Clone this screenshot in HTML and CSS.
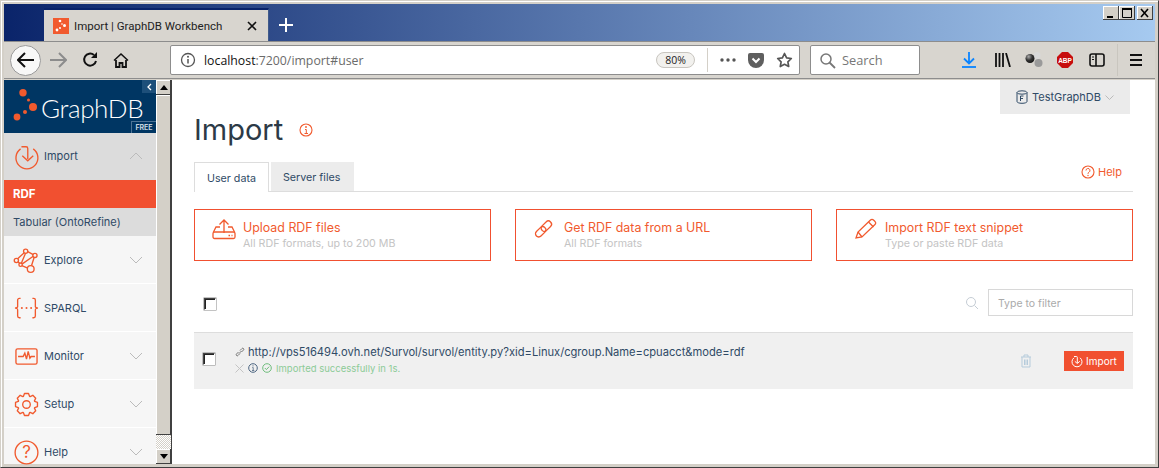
FILE: index.html
```html
<!DOCTYPE html>
<html>
  <head>
    <title>Import | GraphDB Workbench</title>
    <meta charset="utf-8">
    <link rel="stylesheet" href="styles.css">
  </head>
  <body>
    <div class="window">
      <div class="titlebar">
        <div class="tab">
          <svg class="favicon" width="16" height="16" viewBox="0 0 16 16"><rect width="16" height="16" fill="#f15a2e"/><g fill="#fff"><circle cx="7" cy="3" r="1.3"/><circle cx="9" cy="6" r=".8"/><circle cx="11.5" cy="7.5" r="1.5"/><circle cx="7" cy="10" r="1"/><circle cx="4" cy="12" r="1.4"/></g></svg>
          <span class="tab-title">Import | GraphDB Workbench</span>
          <svg class="tab-close" width="10" height="10" viewBox="0 0 10 10"><path d="M1 1l8 8M9 1l-8 8" stroke="#111" stroke-width="1.6"/></svg>
        </div>
        <svg class="newtab" width="14" height="14" viewBox="0 0 14 14"><path d="M7 0v14M0 7h14" stroke="#fff" stroke-width="2"/></svg>
        <div class="winbtns">
          <div class="winbtn"><svg width="16" height="14" viewBox="0 0 16 14"><rect x="4" y="10" width="6" height="2" fill="#000"/></svg></div>
          <div class="winbtn"><svg width="16" height="14" viewBox="0 0 16 14"><path d="M3.5 2.5h9v9h-9z" fill="none" stroke="#000"/><rect x="3" y="2" width="10" height="2" fill="#000"/></svg></div>
          <div class="winbtn winbtn-close"><svg width="16" height="14" viewBox="0 0 16 14"><path d="M4 3l7 8M11 3l-7 8" stroke="#000" stroke-width="1.6"/></svg></div>
        </div>
      </div>

      <div class="toolbar">
        <div class="backbtn">
          <svg width="18" height="16" viewBox="0 0 18 16"><path d="M8 1L1 8l7 7M1 8h16" fill="none" stroke="#111" stroke-width="2"/></svg>
        </div>
        <svg class="tool fwd" width="18" height="16" viewBox="0 0 18 16"><path d="M10 1l7 7-7 7M17 8H1" fill="none" stroke="#8c8c8c" stroke-width="2"/></svg>
        <svg class="tool reload" width="16" height="16" viewBox="0 0 16 16"><path d="M14 9a6 6 0 1 1-2-6" fill="none" stroke="#111" stroke-width="2"/><path d="M15 0v6H9z" fill="#111"/></svg>
        <svg class="tool home" width="16" height="16" viewBox="0 0 16 16"><path d="M8 1L0.5 8l1 1L8 3l6.500 6 1-1z" fill="#111"/><path d="M3 8v7h3.500v-4h3v4H13V8" fill="none" stroke="#111" stroke-width="1.800"/></svg>
        <div class="urlbar">
          <svg class="url-info" width="16" height="16" viewBox="0 0 16 16"><circle cx="8" cy="8" r="6.500" fill="none" stroke="#555" stroke-width="1.300"/><path d="M8 7v4.500" stroke="#555" stroke-width="1.500"/><circle cx="8" cy="4.800" r="1" fill="#555"/></svg>
          <span class="url"><b class="url-host">localhost</b>:7200/import#user</span>
          <span class="zoom-pill">80%</span>
          <span class="url-sep"></span>
          <svg class="url-dots" width="16" height="4" viewBox="0 0 16 4"><circle cx="2" cy="2" r="1.700" fill="#555"/><circle cx="8" cy="2" r="1.700" fill="#555"/><circle cx="14" cy="2" r="1.700" fill="#555"/></svg>
          <svg class="url-pocket" width="16" height="15" viewBox="0 0 16 15"><path d="M0 2a2 2 0 0 1 2-2h12a2 2 0 0 1 2 2v5a8 8 0 0 1-16 0z" fill="#5f5f5f"/><path d="M4.500 5.500L8 9l3.500-3.500" fill="none" stroke="#fff" stroke-width="2"/></svg>
          <svg class="url-star" width="17" height="16" viewBox="0 0 17 16"><path d="M8.500 1.500l2.100 4.300 4.700.7-3.400 3.300.8 4.700-4.200-2.200-4.200 2.200.8-4.700L1.700 6.500l4.700-.7z" fill="none" stroke="#555" stroke-width="1.700" stroke-linejoin="round"/></svg>
        </div>
        <div class="searchbar">
          <svg width="17" height="17" viewBox="0 0 17 17"><circle cx="7" cy="7" r="5" fill="none" stroke="#777" stroke-width="1.500"/><path d="M10.500 10.500L16 16" stroke="#777" stroke-width="1.800"/></svg>
          <span>Search</span>
        </div>
        <svg class="tool dl" width="14" height="16" viewBox="0 0 14 16"><path d="M7 0v11M2 6.500l5 5 5-5" fill="none" stroke="#0a84ff" stroke-width="1.800"/><path d="M0 15h14" stroke="#0a84ff" stroke-width="1.800"/></svg>
        <svg class="tool lib" width="16" height="14" viewBox="0 0 16 14"><path d="M1 0v14M4.500 0v14M8 0v14M11 0l4 14" stroke="#111" stroke-width="1.800"/></svg>
        <svg class="tool balls" width="18" height="16" viewBox="0 0 18 16"><defs><radialGradient id="ball" cx=".35" cy=".3" r=".8"><stop offset="0" stop-color="#aaa"/><stop offset=".5" stop-color="#333"/><stop offset="1" stop-color="#111"/></radialGradient></defs><circle cx="12" cy="3.500" r="3.500" fill="#d8d8d8"/><circle cx="13.500" cy="11" r="4" fill="#9a9a9a"/><circle cx="5" cy="6.500" r="4.500" fill="url(#ball)"/></svg>
        <svg class="tool abp" width="16" height="16" viewBox="0 0 16 16"><path d="M5 0h6l5 5v6l-5 5H5l-5-5V5z" fill="#c70d0d"/><text x="8" y="10.500" class="abp-text" text-anchor="middle">ABP</text></svg>
        <svg class="tool side" width="16" height="14" viewBox="0 0 16 14"><rect x="1" y="1" width="14" height="12" rx="2" fill="none" stroke="#111" stroke-width="1.600"/><path d="M7 1v12" stroke="#111" stroke-width="1.600"/><path d="M3 4h2M3 6.500h2" stroke="#111"/></svg>
        <span class="tool-sep"></span>
        <svg class="tool burger" width="12" height="12" viewBox="0 0 12 12"><path d="M0 1h12M0 6h12M0 11h12" stroke="#111" stroke-width="1.800"/></svg>
      </div>

      <div class="page">
        <div class="sidebar">
          <div class="logo">
            <svg class="logo-dots" width="30" height="36" viewBox="0 0 30 36"><g fill="#f15a2e"><circle cx="10" cy="3.700" r="3.700"/><circle cx="15.500" cy="11" r="1.500"/><circle cx="20" cy="18" r="4"/><circle cx="12" cy="23" r="2"/><circle cx="4" cy="28" r="3.400"/></g></svg>
            <span class="logo-text">GraphDB</span>
            <span class="collapse"><svg width="6" height="8" viewBox="0 0 6 8"><path d="M5 1L2 4l3 3" fill="none" stroke="#fff" stroke-width="1.300"/></svg></span>
            <span class="free">FREE</span>
          </div>
          <div class="menu-item menu-open">
            <svg class="menu-icon" viewBox="0 0 32 32"><path d="M10 4.500h5.500a2 2 0 0 1 2 2V19" fill="none" stroke="#f15a2e"/><path d="M11 15l6.500 6 6.500-6" fill="none" stroke="#f15a2e"/><path d="M9 7a13 13 0 1 0 15 0" fill="none" stroke="#f15a2e"/></svg>
            <span>Import</span>
            <svg class="chev" width="14" height="8" viewBox="0 0 14 8"><path d="M1 7l6-6 6 6" fill="none" stroke="#bbb"/></svg>
          </div>
          <div class="sub sub-active">RDF</div>
          <div class="sub">Tabular (OntoRefine)</div>
          <div class="menu-item">
            <svg class="menu-icon" viewBox="0 0 32 32"><g fill="none" stroke="#f15a2e"><circle cx="15" cy="5" r="2.500"/><circle cx="4" cy="16" r="2.500"/><circle cx="26" cy="10" r="2.500"/><circle cx="21" cy="26" r="4"/><circle cx="9" cy="21" r="2"/><path d="M13 7L5.500 14M17.500 5.500L24 9M25 12.500L22 22M10.500 22l7 3M6 17.500l2 2M10 19l5-12M11 20l13-9"/></g></svg>
            <span>Explore</span>
            <svg class="chev" width="14" height="8" viewBox="0 0 14 8"><path d="M1 1l6 6 6-6" fill="none" stroke="#bbb"/></svg>
          </div>
          <div class="menu-item">
            <svg class="menu-icon" viewBox="0 0 32 32"><g fill="none" stroke="#f15a2e"><path d="M9 4H7.500a2 2 0 0 0-2 2v6.500a2.500 2.500 0 0 1-3 3 2.500 2.500 0 0 1 3 3V25a2 2 0 0 0 2 2H9"/><path d="M23 4h1.500a2 2 0 0 1 2 2v6.500a2.500 2.500 0 0 0 3 3 2.500 2.500 0 0 0-3 3V25a2 2 0 0 1-2 2H23"/></g><g fill="#f15a2e"><circle cx="10.500" cy="15.500" r="1.200"/><circle cx="16" cy="15.500" r="1.200"/><circle cx="21.500" cy="15.500" r="1.200"/></g></svg>
            <span>SPARQL</span>
          </div>
          <div class="menu-item">
            <svg class="menu-icon" viewBox="0 0 32 32"><rect x="3.500" y="7" width="25" height="18" rx="2" fill="none" stroke="#f15a2e"/><path d="M6 16h6l2-4 2 7 2-9 2 8 1.500-2H26" fill="none" stroke="#f15a2e"/></svg>
            <span>Monitor</span>
            <svg class="chev" width="14" height="8" viewBox="0 0 14 8"><path d="M1 1l6 6 6-6" fill="none" stroke="#bbb"/></svg>
          </div>
          <div class="menu-item">
            <svg class="menu-icon" viewBox="0 0 32 32"><g transform="translate(16 16)" fill="none" stroke="#f15a2e" stroke-linejoin="round"><circle r="4.500"/><path d="M-3.600-9.700L-2.400-13H2.400L3.600-9.700L4.310-9.410L7.500-10.900L10.900-7.500L9.410-4.310L9.700-3.600L13-2.400V2.400L9.700 3.600L9.410 4.310L10.900 7.500L7.500 10.900L4.310 9.410L3.600 9.700L2.400 13H-2.400L-3.600 9.700L-4.310 9.410L-7.500 10.900L-10.900 7.500L-9.410 4.310L-9.700 3.600L-13 2.400V-2.400L-9.700-3.600L-9.410-4.310L-10.900-7.500L-7.500-10.900L-4.310-9.410z"/></g></svg>
            <span>Setup</span>
            <svg class="chev" width="14" height="8" viewBox="0 0 14 8"><path d="M1 1l6 6 6-6" fill="none" stroke="#bbb"/></svg>
          </div>
          <div class="menu-item">
            <svg class="menu-icon" viewBox="0 0 32 32"><circle cx="16" cy="16" r="13.500" fill="none" stroke="#f15a2e"/><text x="16" y="23" class="help-q" text-anchor="middle">?</text></svg>
            <span>Help</span>
            <svg class="chev" width="14" height="8" viewBox="0 0 14 8"><path d="M1 1l6 6 6-6" fill="none" stroke="#bbb"/></svg>
          </div>
        </div>

        <div class="scrollbar">
          <div class="sb-btn"><svg width="8" height="5" viewBox="0 0 8 5"><path d="M4 0l4 5H0z" fill="#000"/></svg></div>
          <div class="sb-thumb"></div>
          <div class="sb-track"></div>
          <div class="sb-btn"><svg width="8" height="5" viewBox="0 0 8 5"><path d="M0 0h8L4 5z" fill="#000"/></svg></div>
        </div>

        <div class="main">
          <div class="repo-row">
            <div class="repo">
              <svg width="12" height="14" viewBox="0 0 12 14"><g fill="none" stroke="#2f4a66" stroke-width="1"><ellipse cx="6" cy="2.500" rx="5" ry="1.700"/><path d="M1 2.500v9c0 1 2 1.800 5 1.800s5-.8 5-1.800v-9"/><path d="M4.500 6h3M4.500 6v5M4.500 8.500h2.500"/></g></svg>
              <span>TestGraphDB</span>
              <svg width="9" height="5" viewBox="0 0 9 5"><path d="M.5.500l4 4 4-4" fill="none" stroke="#bbb"/></svg>
            </div>
          </div>

          <div class="title-row">
            <h1>Import</h1>
            <svg width="14" height="14" viewBox="0 0 14 14"><circle cx="7" cy="7" r="6" fill="none" stroke="#f15a2e" stroke-width="1.100"/><path d="M6 6.500h1.300V10.500M5.500 10.500h3.500" fill="none" stroke="#f15a2e"/><circle cx="7" cy="4" r=".9" fill="#f15a2e"/></svg>
          </div>

          <div class="tabs">
            <div class="tabs-link tabs-active">User data</div>
            <div class="tabs-link">Server files</div>
            <div class="help-link">
              <svg width="14" height="14" viewBox="0 0 14 14"><circle cx="7" cy="7" r="6" fill="none" stroke="#f15a2e" stroke-width="1.100"/><path d="M5 5.500a2 2 0 1 1 3 1.700c-.7.400-1 .8-1 1.600" fill="none" stroke="#f15a2e"/><circle cx="7" cy="10.500" r=".7" fill="#f15a2e"/></svg>
              <span>Help</span>
            </div>
          </div>

          <div class="cards">
            <div class="card">
              <svg class="card-icon" width="24" height="22" viewBox="0 0 24 22"><g fill="none" stroke="#f15a2e" stroke-width="1.300"><path d="M12 15V2M7.500 6.500L12 2l4.500 4.500"/><path d="M8 9H4L1.500 14M16 9h4l2.500 5"/><rect x="1" y="14" width="22" height="6.500" rx="1.500"/><path d="M16.500 17.500h1.500M19.500 17.500h1"/></g></svg>
              <div class="card-text">
                <div class="card-title">Upload RDF files</div>
                <div class="card-sub">All RDF formats, up to 200 MB</div>
              </div>
            </div>
            <div class="card">
              <svg class="card-icon" width="24" height="22" viewBox="0 0 24 22"><g transform="translate(-1.500 0) rotate(-45 12 11)" fill="none" stroke="#f15a2e" stroke-width="1.300"><rect x="2" y="7.800" width="12" height="6.400" rx="3.200"/><rect x="10" y="7.800" width="12" height="6.400" rx="3.200"/></g></svg>
              <div class="card-text">
                <div class="card-title">Get RDF data from a URL</div>
                <div class="card-sub">All RDF formats</div>
              </div>
            </div>
            <div class="card">
              <svg class="card-icon" width="24" height="22" viewBox="0 0 24 22"><g fill="none" stroke="#f15a2e" stroke-width="1.300"><path d="M2 20l2-6L16.500 2a2 2 0 0 1 3 0l1.500 1.500a2 2 0 0 1 0 3L8 19z"/><path d="M4 14l4 5M14.500 4l5 5"/></g></svg>
              <div class="card-text">
                <div class="card-title">Import RDF text snippet</div>
                <div class="card-sub">Type or paste RDF data</div>
              </div>
            </div>
          </div>

          <div class="list-head">
            <span class="check"></span>
            <svg class="filter-icon" width="14" height="14" viewBox="0 0 14 14"><circle cx="6" cy="6" r="4.500" fill="none" stroke="#c5cdd5"/><path d="M9.500 9.500L13 13" stroke="#c5cdd5"/></svg>
            <div class="filter">Type to filter</div>
          </div>

          <div class="import-row">
            <span class="check"></span>
            <div class="row-info">
              <div class="row-url">
                <svg width="10" height="10" viewBox="0 0 10 10"><g fill="none" stroke="#777"><path d="M4 6.500L6.500 4"/><path d="M3.500 5L1.500 7a1 1 0 0 0 1.500 1.500L5 6.500"/><path d="M6.500 5L8.500 3A1 1 0 0 0 7 1.500L5 3.500"/></g></svg>
                <span>http://vps516494.ovh.net/Survol/survol/entity.py?xid=Linux/cgroup.Name=cpuacct&amp;mode=rdf</span>
              </div>
              <div class="row-status">
                <svg width="9" height="9" viewBox="0 0 9 9"><path d="M.5.500l8 8M8.500.500l-8 8" stroke="#c4c4c4"/></svg>
                <svg width="10" height="10" viewBox="0 0 10 10"><circle cx="5" cy="5" r="4.300" fill="none" stroke="#4c6580"/><path d="M4.300 4.500H5.200V7.500M4 7.500h2.300" fill="none" stroke="#4c6580" stroke-width=".8"/><circle cx="5" cy="2.800" r=".6" fill="#4c6580"/></svg>
                <svg width="10" height="10" viewBox="0 0 10 10"><circle cx="5" cy="5" r="4.300" fill="none" stroke="#6fbd7c"/><path d="M2.800 5l1.600 1.600 2.800-3" fill="none" stroke="#6fbd7c"/></svg>
                <span>Imported successfully in 1s.</span>
              </div>
            </div>
            <svg class="trash" width="12" height="14" viewBox="0 0 12 14"><g fill="none" stroke="#b5cbdb"><path d="M1 3h10M4 3V1h4v2M2 3v10h8V3"/><path d="M4.500 5.500v5.500M6 5.500v5.500M7.500 5.500v5.500"/></g></svg>
            <div class="import-btn">
              <svg width="12" height="13" viewBox="0 0 12 13"><g fill="none" stroke="#fff"><path d="M3 1.500h2.500a.8.800 0 0 1 .8.800V8"/><path d="M3.800 6.300L6.300 8.500l2.500-2.200"/><path d="M3 2.800a5 5 0 1 0 6 0"/></g></svg>
              <span>Import</span>
            </div>
          </div>
        </div>
      </div>
    </div>
  </body>
</html>
```

FILE: styles.css
```css
html, body {
  margin: 0;
  height: 468px;
  overflow: hidden;
}

.window {
  box-sizing: border-box;
  width: 1159px;
  height: 468px;
  display: flex;
  flex-direction: column;
  background: #d4d0c8;
  border: 1px solid #404040;
  border-top-color: #d4d0c8;
  border-left-color: #d4d0c8;
  padding: 3px;
  box-shadow: inset 1px 1px 0 #fff;
  overflow: hidden;
}

.titlebar {
  height: 37px;
  flex: none;
  display: flex;
  align-items: flex-end;
  padding-left: 40px;
  background: linear-gradient(90deg, #0a246a, #a6caf0);
}

.tab {
  box-sizing: border-box;
  width: 225px;
  height: 33px;
  display: flex;
  align-items: center;
  padding: 0 11px 0 9px;
  background: #d8d5cf;
  border-top: 2px solid #0a246a;
  border-right: 1px solid #3f5a8a;
}

.favicon {
  margin-right: 5px;
}

.tab-title {
  flex: 1;
  font: 11.5px Roboto, sans-serif;
  color: #222;
  white-space: nowrap;
}

.newtab {
  margin: 0 0 9px 10px;
}

.winbtns {
  margin: 0 2px 21px auto;
  display: flex;
}

.winbtn {
  width: 16px;
  height: 14px;
  background: #d4d0c8;
  box-shadow: inset -1px -1px 0 #404040, inset 1px 1px 0 #fff;
}

.winbtn-close {
  margin-left: 2px;
}

.toolbar {
  box-sizing: border-box;
  height: 38px;
  flex: none;
  display: flex;
  align-items: center;
  padding-left: 6px;
  background: #d8d5cf;
  border-top: 1px solid #8d8d8d;
  border-bottom: 1px solid #8d8d8d;
}

.backbtn {
  box-sizing: border-box;
  width: 31px;
  height: 31px;
  display: flex;
  align-items: center;
  justify-content: center;
  background: #f8f8f7;
  border: 1px solid #9a9a9a;
  border-radius: 50%;
}

.fwd {
  margin-left: 8px;
}

.reload {
  margin-left: 15px;
}

.home {
  margin-left: 15px;
}

.urlbar {
  box-sizing: border-box;
  width: 630px;
  height: 30px;
  margin-left: 41px;
  display: flex;
  align-items: center;
  padding-left: 9px;
  background: #fff;
  border: 1px solid #8d8d8d;
  border-radius: 2px;
}

.url {
  margin-left: 8px;
  flex: 1;
  font: 12.3px "Open Sans", sans-serif;
  color: #6b6b6b;
  white-space: nowrap;
}

.url-host {
  font-weight: 400;
  color: #111;
}

.zoom-pill {
  box-sizing: border-box;
  width: 39px;
  height: 16px;
  border: 1px solid #c8c5bf;
  border-radius: 8px;
  background: #f2f1ee;
  font: 10.5px/14px "Open Sans", sans-serif;
  text-align: center;
  color: #222;
}

.url-sep {
  width: 1px;
  height: 24px;
  margin-left: 12px;
  background: #d4d0c8;
}

.url-dots {
  margin-left: 12px;
}

.url-pocket {
  margin-left: 12px;
}

.url-star {
  margin: 0 6px 0 12px;
}

.searchbar {
  box-sizing: border-box;
  width: 110px;
  height: 30px;
  margin-left: 10px;
  display: flex;
  align-items: center;
  gap: 6px;
  padding-left: 8px;
  background: #fff;
  border: 1px solid #8d8d8d;
  border-radius: 2px;
  font: 12.8px "Open Sans", sans-serif;
  color: #777;
}

.dl {
  margin-left: 42px;
}

.lib {
  margin-left: 19px;
}

.balls {
  margin-left: 14px;
}

.abp {
  margin-left: 14px;
}

.abp-text {
  font: bold 6.5px "Liberation Sans", sans-serif;
  fill: #fff;
}

.side {
  margin-left: 16px;
}

.tool-sep {
  width: 1px;
  height: 32px;
  margin-left: 12px;
  background: #c9c6bf;
}

.burger {
  margin-left: 12px;
}

.page {
  flex: 1;
  min-height: 0;
  display: flex;
  margin-top: 1px;
}

.sidebar {
  width: 152px;
  flex: none;
  background: #f6f6f6;
  font: 11px Inter, sans-serif;
  color: #2f4a66;
}

.logo {
  position: relative;
  height: 53px;
  background: #003663;
}

.logo-dots {
  position: absolute;
  left: 9px;
  top: 9px;
}

.logo-text {
  position: absolute;
  left: 37px;
  top: 12px;
  font: 300 26px Lato, sans-serif;
  letter-spacing: -.4px;
  color: #fff;
}

.collapse {
  position: absolute;
  right: 0;
  top: 0;
  width: 14px;
  height: 13px;
  display: flex;
  align-items: center;
  justify-content: center;
  background: #1d4f7a;
}

.free {
  position: absolute;
  right: 0;
  bottom: 0;
  box-sizing: border-box;
  width: 25px;
  height: 12px;
  border: 1px solid #4d7396;
  border-bottom: 0;
  border-right: 0;
  font: bold 7px/11px Inter, sans-serif;
  text-align: center;
  color: #c5d3df;
}

.menu-item {
  box-sizing: border-box;
  height: 48px;
  display: flex;
  align-items: center;
  padding: 1px 0 0 9px;
  border-bottom: 1px solid #fff;
}

.menu-item span {
  margin-left: 4px;
}

.menu-icon {
  width: 27px;
  height: 27px;
  flex: none;
}

.menu-icon * {
  stroke-width: 1.6;
}

.menu-open {
  height: 47px;
  padding: 0 0 1px 9px;
  background: #dcdcdc;
  border-bottom: 0;
}

.chev {
  margin-left: auto;
  margin-right: 13px;
}

.sub {
  height: 28px;
  line-height: 28px;
  padding-left: 9px;
  background: #dcdcdc;
  font-size: 11px;
}

.sub-active {
  background: #f15030;
  color: #fff;
  font-weight: 700;
  font-size: 11.5px;
}

.help-q {
  font: 20px Inter, sans-serif;
  fill: #f15a2e;
}

.scrollbar {
  box-sizing: border-box;
  width: 16px;
  flex: none;
  display: flex;
  flex-direction: column;
  border-right: 1px solid #404040;
  background: #d4d0c8;
}

.sb-btn {
  height: 15px;
  flex: none;
  display: flex;
  align-items: center;
  justify-content: center;
  background: #d4d0c8;
  box-shadow: inset -1px -1px 0 #404040, inset 1px 1px 0 #fff;
}

.sb-thumb {
  flex: 1;
  background: #d4d0c8;
  box-shadow: inset -1px -1px 0 #404040, inset 1px 1px 0 #fff;
}

.sb-track {
  height: 14px;
  flex: none;
  background: repeating-conic-gradient(#fff 0 25%, #d4d0c8 0 50%) 0 0 / 2px 2px;
}

.main {
  flex: 1;
  min-width: 0;
  padding: 0 22px;
  background: #fff;
  font-family: Inter, sans-serif;
  color: #2f4a66;
}

.repo-row {
  display: flex;
  justify-content: flex-end;
  padding-right: 3px;
}

.repo {
  width: 130px;
  height: 34px;
  display: flex;
  align-items: center;
  justify-content: center;
  gap: 4px;
  background: #ebebeb;
  font-size: 11px;
}

.title-row {
  display: flex;
  align-items: center;
  gap: 16px;
  height: 32px;
  margin-top: 0;
}

h1 {
  margin: 0;
  font: 400 29px/32px Inter, sans-serif;
  color: #2c3a47;
}

.tabs {
  display: flex;
  align-items: flex-start;
  height: 29px;
  margin-top: 16px;
  border-bottom: 1px solid #ddd;
}

.tabs-link {
  box-sizing: border-box;
  width: 83px;
  height: 29px;
  margin-right: 2px;
  padding-left: 12px;
  line-height: 31px;
  font-size: 10.7px;
  background: #ececec;
}

.tabs-active {
  width: 75px;
  height: 30px;
  background: #fff;
  border: 1px solid #ddd;
  border-bottom: 0;
}

.help-link {
  margin-left: auto;
  margin-right: 11px;
  padding-top: 3px;
  display: flex;
  gap: 3px;
  font-size: 11px;
  color: #f15a2e;
}

.cards {
  display: flex;
  justify-content: space-between;
  margin-top: 17px;
}

.card {
  box-sizing: border-box;
  width: 297px;
  height: 52px;
  display: flex;
  align-items: center;
  gap: 7px;
  padding-left: 17px;
  border: 1px solid #f15030;
}

.card-icon {
  margin-bottom: 12px;
}

.card-title {
  font-size: 12.4px;
  color: #f15a2e;
}

.card-sub {
  margin-top: 2px;
  font-size: 10.7px;
  color: #c4c4c4;
}

.list-head {
  display: flex;
  align-items: center;
  height: 27px;
  margin-top: 28px;
  padding-left: 10px;
}

.list-head .check {
  margin-top: 2px;
}

.check {
  box-sizing: border-box;
  width: 12px;
  height: 12px;
  flex: none;
  background: #fff;
  border: 1px solid #fff;
  border-top-color: #444;
  border-left-color: #444;
  box-shadow: inset 1px 1px 0 #222, 0 0 0 .5px #888;
}

.filter-icon {
  margin-left: auto;
  margin-right: 9px;
}

.filter {
  box-sizing: border-box;
  width: 145px;
  height: 27px;
  padding-left: 9px;
  border: 1px solid #d8d8d8;
  font-size: 10.5px;
  line-height: 27px;
  color: #aaa;
}

.import-row {
  box-sizing: border-box;
  height: 57px;
  margin-top: 16px;
  display: flex;
  align-items: center;
  padding: 0 9px;
  background: #f0f0f0;
  border-top: 1px solid #ddd;
}

.import-row .check {
  margin-bottom: 5px;
}

.row-info {
  flex: 1;
  margin: 0 0 4px 20px;
}

.row-url {
  display: flex;
  align-items: center;
  gap: 3px;
  font-size: 11.15px;
  color: #2f4a66;
}

.row-status {
  margin-top: 4px;
  display: flex;
  align-items: center;
  gap: 4px;
  font-size: 9.5px;
  color: #8ccb97;
}

.trash {
  margin-right: 32px;
}

.import-btn {
  width: 60px;
  height: 20px;
  display: flex;
  align-items: center;
  justify-content: center;
  gap: 3px;
  background: #f15030;
  font-size: 10px;
  color: #fff;
}
```
